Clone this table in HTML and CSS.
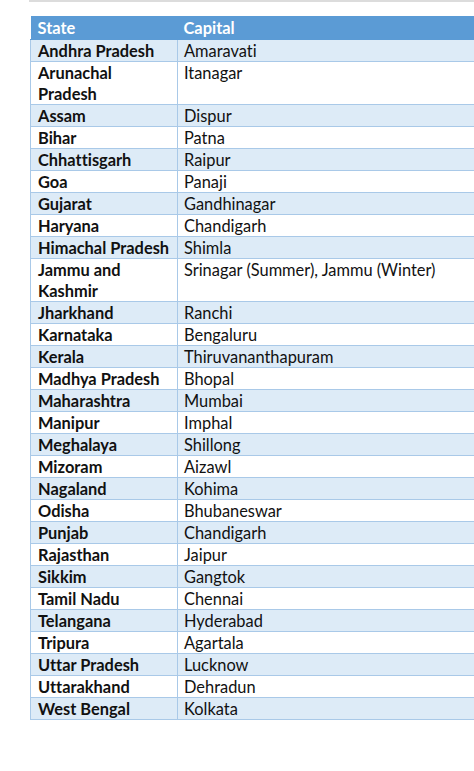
FILE: index.html
```html
<!DOCTYPE html>
<html lang="en">
<head>
<meta charset="utf-8">
<title>States and Capitals</title>
<link rel="stylesheet" href="styles.css">
</head>
<body>
<div class="page">
  <div class="topbar"></div>
  <table class="states">
    <thead>
      <tr><th class="col-state">State</th><th>Capital</th></tr>
    </thead>
    <tbody>
      <tr><td class="st">Andhra Pradesh</td><td>Amaravati</td></tr>
      <tr><td class="st">Arunachal<br>Pradesh</td><td>Itanagar</td></tr>
      <tr><td class="st">Assam</td><td>Dispur</td></tr>
      <tr><td class="st">Bihar</td><td>Patna</td></tr>
      <tr><td class="st">Chhattisgarh</td><td>Raipur</td></tr>
      <tr><td class="st">Goa</td><td>Panaji</td></tr>
      <tr><td class="st">Gujarat</td><td>Gandhinagar</td></tr>
      <tr><td class="st">Haryana</td><td>Chandigarh</td></tr>
      <tr><td class="st">Himachal Pradesh</td><td>Shimla</td></tr>
      <tr><td class="st">Jammu and<br>Kashmir</td><td>Srinagar (Summer), Jammu (Winter)</td></tr>
      <tr><td class="st">Jharkhand</td><td>Ranchi</td></tr>
      <tr><td class="st">Karnataka</td><td>Bengaluru</td></tr>
      <tr><td class="st">Kerala</td><td>Thiruvananthapuram</td></tr>
      <tr><td class="st">Madhya Pradesh</td><td>Bhopal</td></tr>
      <tr><td class="st">Maharashtra</td><td>Mumbai</td></tr>
      <tr><td class="st">Manipur</td><td>Imphal</td></tr>
      <tr><td class="st">Meghalaya</td><td>Shillong</td></tr>
      <tr><td class="st">Mizoram</td><td>Aizawl</td></tr>
      <tr><td class="st">Nagaland</td><td>Kohima</td></tr>
      <tr><td class="st">Odisha</td><td>Bhubaneswar</td></tr>
      <tr><td class="st">Punjab</td><td>Chandigarh</td></tr>
      <tr><td class="st">Rajasthan</td><td>Jaipur</td></tr>
      <tr><td class="st">Sikkim</td><td>Gangtok</td></tr>
      <tr><td class="st">Tamil Nadu</td><td>Chennai</td></tr>
      <tr><td class="st">Telangana</td><td>Hyderabad</td></tr>
      <tr><td class="st">Tripura</td><td>Agartala</td></tr>
      <tr><td class="st">Uttar Pradesh</td><td>Lucknow</td></tr>
      <tr><td class="st">Uttarakhand</td><td>Dehradun</td></tr>
      <tr><td class="st">West Bengal</td><td>Kolkata</td></tr>
    </tbody>
  </table>
</div>
</body>
</html>
```
FILE: styles.css
```css
html, body {
  margin: 0;
  padding: 0;
  background: #ffffff;
}
body {
  font-family: Lato, "Open Sans", "Liberation Sans", sans-serif;
  color: #111111;
  overflow: hidden;
  font-variant-ligatures: none;
  font-feature-settings: "liga" 0;
}
.page {
  padding-left: 30px;
}
.topbar {
  height: 2px;
  background: #dcdcdc;
  margin-left: -1px;
  margin-bottom: 14px;
}
.states {
  border-collapse: collapse;
  width: 100%;
  font-size: 16.4px;
  line-height: 21px;
}
.states th,
.states td {
  text-align: left;
  vertical-align: top;
  padding: 0 6px 0 6px;
  border-top: 1px solid #a9c9e8;
  border-bottom: 1px solid #a9c9e8;
}
.states th {
  background: #5b9bd5;
  color: #ffffff;
  font-weight: 700;
  border-color: #5b9bd5;
  line-height: 22px;
}
.states .col-state {
  width: 134px;
  padding-left: 7px;
}
.states td.st {
  font-weight: 700;
  padding-left: 7px;
  border-left: 1px solid #a9c9e8;
  border-right: 1px solid #a9c9e8;
}
.states tbody tr:nth-child(odd) td {
  background: #ddebf7;
}
```
